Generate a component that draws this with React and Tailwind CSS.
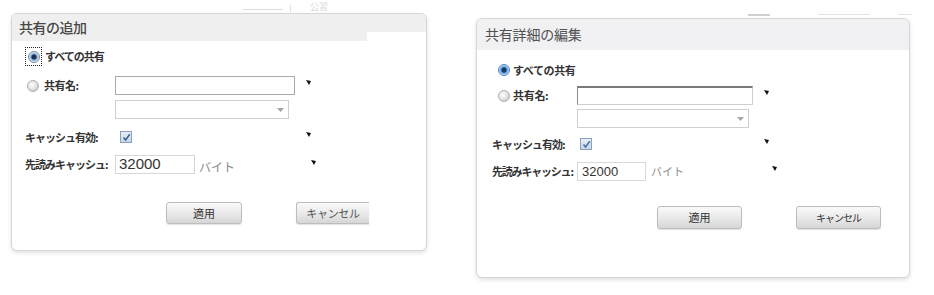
import React from "react";

const jp = "font-['Noto_Sans_CJK_JP','Noto_Sans_CJK_SC',sans-serif]";

const Marker = ({ className = "" }) => (
  <svg width="5" height="5" viewBox="0 0 5 5" className={className}>
    <polygon points="0,0 5,1 3,5" fill="#111" />
  </svg>
);

const Radio = ({ checked, blue }) =>
  checked ? (
    <span
      className={
        "block w-[12px] h-[12px] rounded-full border " +
        (blue
          ? "border-[#4a7fbf] bg-[radial-gradient(circle,#163a6a_0,#163a6a_2px,#4f90d6_3px,#d6e7f7_5px)]"
          : "border-[#7d8894] bg-[radial-gradient(circle,#1b2f52_0,#1b2f52_2px,#7aa6d4_3px,#e6eef6_5px)]")
      }
    />
  ) : (
    <span className="block w-[12px] h-[12px] rounded-full border border-[#b0b0b0] bg-[radial-gradient(circle_at_40%_40%,#ffffff_0,#e4e4e4_4px,#cfcfcf_6px)]" />
  );

const Check = ({ color }) => (
  <span className="flex items-center justify-center w-[12px] h-[12px] border border-[#8aa0bc] bg-[linear-gradient(#e7eef7,#c9d6e6)]">
    <svg width="9" height="9" viewBox="0 0 9 9">
      <path d="M1.5 4.5 L3.6 7 L7.8 1.2" fill="none" stroke={color} strokeWidth="1.6" />
    </svg>
  </span>
);

const SelectBox = ({ w }) => (
  <div className={"h-[19px] border border-[#cfcfcf] bg-white flex items-center justify-end pr-[4px] " + w}>
    <svg width="7" height="4" viewBox="0 0 7 4">
      <polygon points="0,0 7,0 3.5,4" fill="#a5a5a5" />
    </svg>
  </div>
);

const Button = ({ children, className = "" }) => (
  <div
    className={
      "flex items-center justify-center rounded-[3px] border border-[#bdbdbd] bg-[linear-gradient(#fafafa,#e6e6e6_60%,#d6d6d6)] shadow-[0_1px_1px_rgba(0,0,0,0.12)] " +
      className
    }>
    {children}
  </div>
);

const AddDialog = () => (
  <div className="relative w-[416px] h-[238px] border border-[#d6d6d6] rounded-[6px] bg-white shadow-[0_2px_4px_rgba(0,0,0,0.12)] overflow-hidden flex flex-col">
    <div className="relative h-[27px] bg-[#efefef] pl-[7px] flex items-center">
      <span className="text-[14px] tracking-[-0.5px] text-[#474747] font-medium">共有の追加</span>
      <div className="absolute right-0 bottom-0 w-[59px] h-[9px] bg-white" />
    </div>

    <div className="mt-[6px] pl-[13px] flex items-center h-[19px]">
      <span className="flex items-center justify-center w-[17px] h-[19px] border border-dotted border-[#222]">
        <Radio checked />
      </span>
      <span className="ml-[3px] text-[11px] tracking-[-1px] font-bold text-[#333]">すべての共有</span>
    </div>

    <div className="mt-[10px] pl-[13px] flex items-center h-[19px]">
      <div className="w-[90px] flex items-center pl-[2px]">
        <Radio />
        <span className="ml-[5px] text-[11px] tracking-[-0.5px] font-bold text-[#333]">共有名:</span>
      </div>
      <div className="w-[180px] h-[19px] border border-[#a9a9a9] bg-white" />
      <Marker className="ml-[11px] mb-[6px]" />
    </div>

    <div className="mt-[5px] pl-[103px]">
      <SelectBox w="w-[174px]" />
    </div>

    <div className="mt-[9px] pl-[13px] flex items-center h-[18px]">
      <span className="w-[95px] text-[11px] tracking-[-1px] font-bold text-[#333]">キャッシュ有効:</span>
      <Check color="#3d5f93" />
      <Marker className="ml-[174px] mb-[6px]" />
    </div>

    <div className="mt-[9px] pl-[13px] flex items-center h-[19px]">
      <span className="w-[90px] text-[11px] tracking-[-1px] font-bold text-[#333]">先読みキャッシュ:</span>
      <div className="w-[80px] h-[19px] border border-[#d6d6d6] bg-white flex items-center pl-[3px] font-['Liberation_Sans',sans-serif] text-[15px] text-[#333]">
        32000
      </div>
      <span className="ml-[4px] mt-[4px] text-[12px] text-[#888]">バイト</span>
      <Marker className="ml-[76px] mb-[4px]" />
    </div>

    <div className="mt-[28px] pl-[154px] flex">
      <Button className="w-[76px] h-[22px]">
        <span className="text-[11px] text-[#333]">適用</span>
      </Button>
      <Button className="ml-[54px] w-[73px] h-[22px] rounded-r-none border-r-0 items-start pt-[2px]">
        <span className="text-[11px] text-[#555] tracking-[-0.3px]">キャンセル</span>
      </Button>
    </div>
  </div>
);

const EditDialog = () => (
  <div className="w-[434px] h-[260px] border border-[#d6d6d6] rounded-[6px] bg-white shadow-[0_2px_4px_rgba(0,0,0,0.12)] overflow-hidden flex flex-col">
    <div className="h-[31px] bg-[#f1f1f3] pl-[8px] flex items-center">
      <span className="text-[14px] tracking-[-0.2px] text-[#505050]">共有詳細の編集</span>
    </div>

    <div className="mt-[11px] pl-[21px] flex items-center h-[18px]">
      <Radio checked blue />
      <span className="ml-[3px] text-[11px] tracking-[-0.4px] font-bold text-[#333]">すべての共有</span>
    </div>

    <div className="mt-[7px] pl-[15px] flex items-center h-[19px]">
      <div className="w-[85px] flex items-center pl-[6px]">
        <Radio />
        <span className="ml-[3px] text-[11px] tracking-[-0.3px] font-bold text-[#333]">共有名:</span>
      </div>
      <div className="w-[176px] h-[19px] border border-[#cfcfcf] border-t-2 border-t-[#7a7a7a] border-l-[#8a8a8a] bg-white" />
      <Marker className="ml-[11px] mb-[6px]" />
    </div>

    <div className="mt-[4px] pl-[100px]">
      <SelectBox w="w-[172px] h-[18px]" />
    </div>

    <div className="mt-[7px] pl-[15px] flex items-center h-[18px]">
      <span className="w-[88px] text-[11px] tracking-[-1px] font-bold text-[#333]">キャッシュ有効:</span>
      <Check color="#4b72a8" />
      <Marker className="ml-[172px] mb-[6px]" />
    </div>

    <div className="mt-[9px] pl-[15px] flex items-center h-[19px]">
      <span className="w-[85px] text-[11px] tracking-[-1.2px] font-bold text-[#333]">先読みキャッシュ:</span>
      <div className="w-[69px] h-[19px] border border-[#d8d8d8] bg-white flex items-center pl-[4px] font-['Liberation_Sans',sans-serif] text-[13px] text-[#333]">
        32000
      </div>
      <span className="ml-[5px] text-[11px] text-[#8a8a8a]">バイト</span>
      <Marker className="ml-[88px] mb-[6px]" />
    </div>

    <div className="mt-[25px] pl-[180px] flex">
      <Button className="w-[85px] h-[23px]">
        <span className="text-[11px] text-[#333]">適用</span>
      </Button>
      <Button className="ml-[54px] w-[85px] h-[23px]">
        <span className="text-[10px] text-[#333] tracking-[-1px]">キャンセル</span>
      </Button>
    </div>
  </div>
);

export default function App() {
  return (
    <div className={"relative w-[934px] h-[295px] bg-white overflow-hidden " + jp}>
      {/* faint page text peeking above the dialogs */}
      <div className="absolute left-[243px] top-[9px] w-[40px] h-[1px] bg-[#dedede]" />
      <div className="absolute left-[290px] top-[5px] w-[1px] h-[7px] bg-[#dedede]" />
      <span className="absolute left-[310px] top-[1px] text-[9px] leading-[11px] text-[#d8d8d8]">公習</span>
      <div className="absolute left-[748px] top-[14px] w-[22px] h-[2px] bg-[#cfcfcf]" />
      <div className="absolute left-[818px] top-[14px] w-[52px] h-[1px] bg-[#e2e2e2]" />
      <div className="absolute left-[898px] top-[14px] w-[14px] h-[1px] bg-[#e2e2e2]" />

      <div className="relative flex items-start pl-[11px] pt-[13px]">
        <AddDialog />
        <div className="ml-[49px] mt-[5px]">
          <EditDialog />
        </div>
      </div>
    </div>
  );
}
